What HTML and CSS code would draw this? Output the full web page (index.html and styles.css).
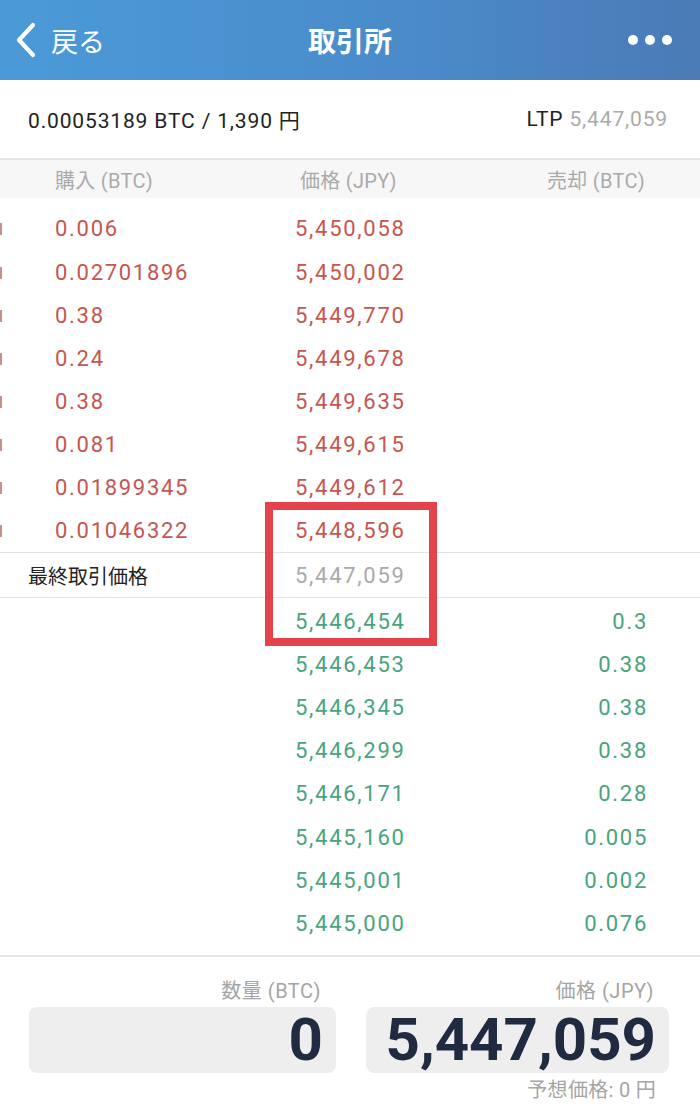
FILE: index.html
```html
<!DOCTYPE html>
<html lang="ja">
<head>
<meta charset="utf-8">
<link rel="stylesheet" href="styles.css">
</head>
<body>
<div class="page">
  <header class="nav">
    <div class="nav-back">
      <svg class="chev" width="24" height="36" viewBox="0 0 24 36"><path d="M19 3 L5 18 L19 33" fill="none" stroke="#fff" stroke-width="4.2" stroke-linecap="round" stroke-linejoin="round"/></svg>
      <span>戻る</span>
    </div>
    <div class="nav-title">取引所</div>
    <div class="nav-more"><i></i><i></i><i></i></div>
  </header>

  <section class="info">
    <div class="balance">0.00053189 BTC / 1,390 円</div>
    <div class="ltp">LTP <span>5,447,059</span></div>
  </section>

  <div class="colhead">
    <span class="c-buy">購入 (BTC)</span>
    <span class="c-price">価格 (JPY)</span>
    <span class="c-sell">売却 (BTC)</span>
  </div>

  <div class="book asks">
    <div class="row"><b class="bar"></b><span class="c-buy">0.006</span><span class="c-price">5,450,058</span><span class="c-sell"></span></div>
    <div class="row"><b class="bar"></b><span class="c-buy">0.02701896</span><span class="c-price">5,450,002</span><span class="c-sell"></span></div>
    <div class="row"><b class="bar"></b><span class="c-buy">0.38</span><span class="c-price">5,449,770</span><span class="c-sell"></span></div>
    <div class="row"><b class="bar"></b><span class="c-buy">0.24</span><span class="c-price">5,449,678</span><span class="c-sell"></span></div>
    <div class="row"><b class="bar"></b><span class="c-buy">0.38</span><span class="c-price">5,449,635</span><span class="c-sell"></span></div>
    <div class="row"><b class="bar"></b><span class="c-buy">0.081</span><span class="c-price">5,449,615</span><span class="c-sell"></span></div>
    <div class="row"><b class="bar"></b><span class="c-buy">0.01899345</span><span class="c-price">5,449,612</span><span class="c-sell"></span></div>
    <div class="row"><b class="bar"></b><span class="c-buy">0.01046322</span><span class="c-price">5,448,596</span><span class="c-sell"></span></div>
  </div>

  <div class="last">
    <span class="c-label">最終取引価格</span>
    <span class="c-price">5,447,059</span>
    <span class="c-sell"></span>
  </div>

  <div class="book bids">
    <div class="row"><span class="c-buy"></span><span class="c-price">5,446,454</span><span class="c-sell">0.3</span></div>
    <div class="row"><span class="c-buy"></span><span class="c-price">5,446,453</span><span class="c-sell">0.38</span></div>
    <div class="row"><span class="c-buy"></span><span class="c-price">5,446,345</span><span class="c-sell">0.38</span></div>
    <div class="row"><span class="c-buy"></span><span class="c-price">5,446,299</span><span class="c-sell">0.38</span></div>
    <div class="row"><span class="c-buy"></span><span class="c-price">5,446,171</span><span class="c-sell">0.28</span></div>
    <div class="row"><span class="c-buy"></span><span class="c-price">5,445,160</span><span class="c-sell">0.005</span></div>
    <div class="row"><span class="c-buy"></span><span class="c-price">5,445,001</span><span class="c-sell">0.002</span></div>
    <div class="row"><span class="c-buy"></span><span class="c-price">5,445,000</span><span class="c-sell">0.076</span></div>
  </div>

  <section class="order">
    <div class="field">
      <div class="f-label">数量 (BTC)</div>
      <div class="f-box">0</div>
    </div>
    <div class="field">
      <div class="f-label">価格 (JPY)</div>
      <div class="f-box">5,447,059</div>
      <div class="f-note">予想価格: 0 円</div>
    </div>
  </section>

  <div class="highlight"></div>
</div>
</body>
</html>
```
FILE: styles.css
```css
* { box-sizing: border-box; margin: 0; padding: 0; }
html, body { background: #fff; }
body {
  font-family: Roboto, "Noto Sans CJK JP", sans-serif;
  color: #222;
}
.page { position: relative; width: 700px; height: 1107px; overflow: hidden; }

.nav {
  height: 80px;
  background: linear-gradient(90deg, #4b9ad8 0%, #4a8ccb 55%, #4a7bb6 100%);
  display: flex;
  align-items: center;
  justify-content: space-between;
  padding: 0 28px 0 14px;
  color: #fff;
  position: relative;
}
.nav-back { display: flex; align-items: center; gap: 13px; font-size: 27px; }
.nav-back .chev { display: block; }
.nav-title {
  position: absolute; left: 0; right: 0; text-align: center;
  font-size: 28px; font-weight: 700; pointer-events: none;
}
.nav-more { display: flex; gap: 7px; }
.nav-more i { width: 10px; height: 10px; border-radius: 50%; background: #fff; display: block; }

.info {
  height: 80px;
  display: flex; align-items: center; justify-content: space-between;
  padding: 0 32px 0 28px;
  border-bottom: 2px solid #e6e6e6;
  font-size: 21px;
  letter-spacing: 0.85px;
}
.ltp { color: #222; }
.ltp span { color: #aaa; }

.colhead, .book .row, .last {
  display: grid; grid-template-columns: 295px 160px 1fr;
  align-items: center;
  position: relative;
}
.colhead {
  height: 38px; background: #f7f7f7;
  font-size: 20px; color: #aaa; letter-spacing: 0.3px;
}
.colhead .c-buy { padding-left: 55px; }
.colhead .c-price { padding-left: 5px; }
.colhead .c-sell { justify-self: end; padding-right: 55px; }

.book .row, .last {
  height: 43.14px;
  font-size: 22px;
  letter-spacing: 1.7px;
}
.asks { padding-top: 9.4px; color: #c5564f; }
.bids { color: #48a37e; padding-top: 1.5px; }
.book .c-buy { padding-left: 55px; }
.book .c-sell { justify-self: end; padding-right: 52px; }
.bar {
  position: absolute; left: 0; top: 16px; width: 2px; height: 12px;
  background: #c8908d;
}

.last {
  height: 46px;
  border-top: 1px solid #e3e3e3;
  border-bottom: 1px solid #e3e3e3;
}
.last .c-label { padding-left: 28px; font-size: 20px; color: #222; letter-spacing: 0; }
.last .c-price { color: #aaa; }

.order {
  margin-top: 10px;
  border-top: 2px solid #e6e6e6;
  display: grid; grid-template-columns: 307px 303px;
  column-gap: 30px;
  padding: 22px 31px 0 29px;
}
.field { display: flex; flex-direction: column; align-items: stretch; }
.f-label {
  text-align: right; font-size: 20px; letter-spacing: 0.5px; color: #a5a5a5;
  padding-right: 15px; height: 24px; line-height: 24px; margin-bottom: 4px;
}
.f-box {
  height: 66px; border-radius: 8px; background: #eeeeee;
  text-align: right; padding-right: 13px;
  font-size: 60px; font-weight: 700; color: #202b42;
  line-height: 66px;
}
.f-note { text-align: right; font-size: 20px; letter-spacing: 0.3px; color: #a5a5a5; padding-right: 13px; line-height: 26px; margin-top: 4px; }

.highlight {
  position: absolute; left: 265px; top: 502px; width: 172px; height: 144px;
  border: 8px solid #e5434b;
}
```
